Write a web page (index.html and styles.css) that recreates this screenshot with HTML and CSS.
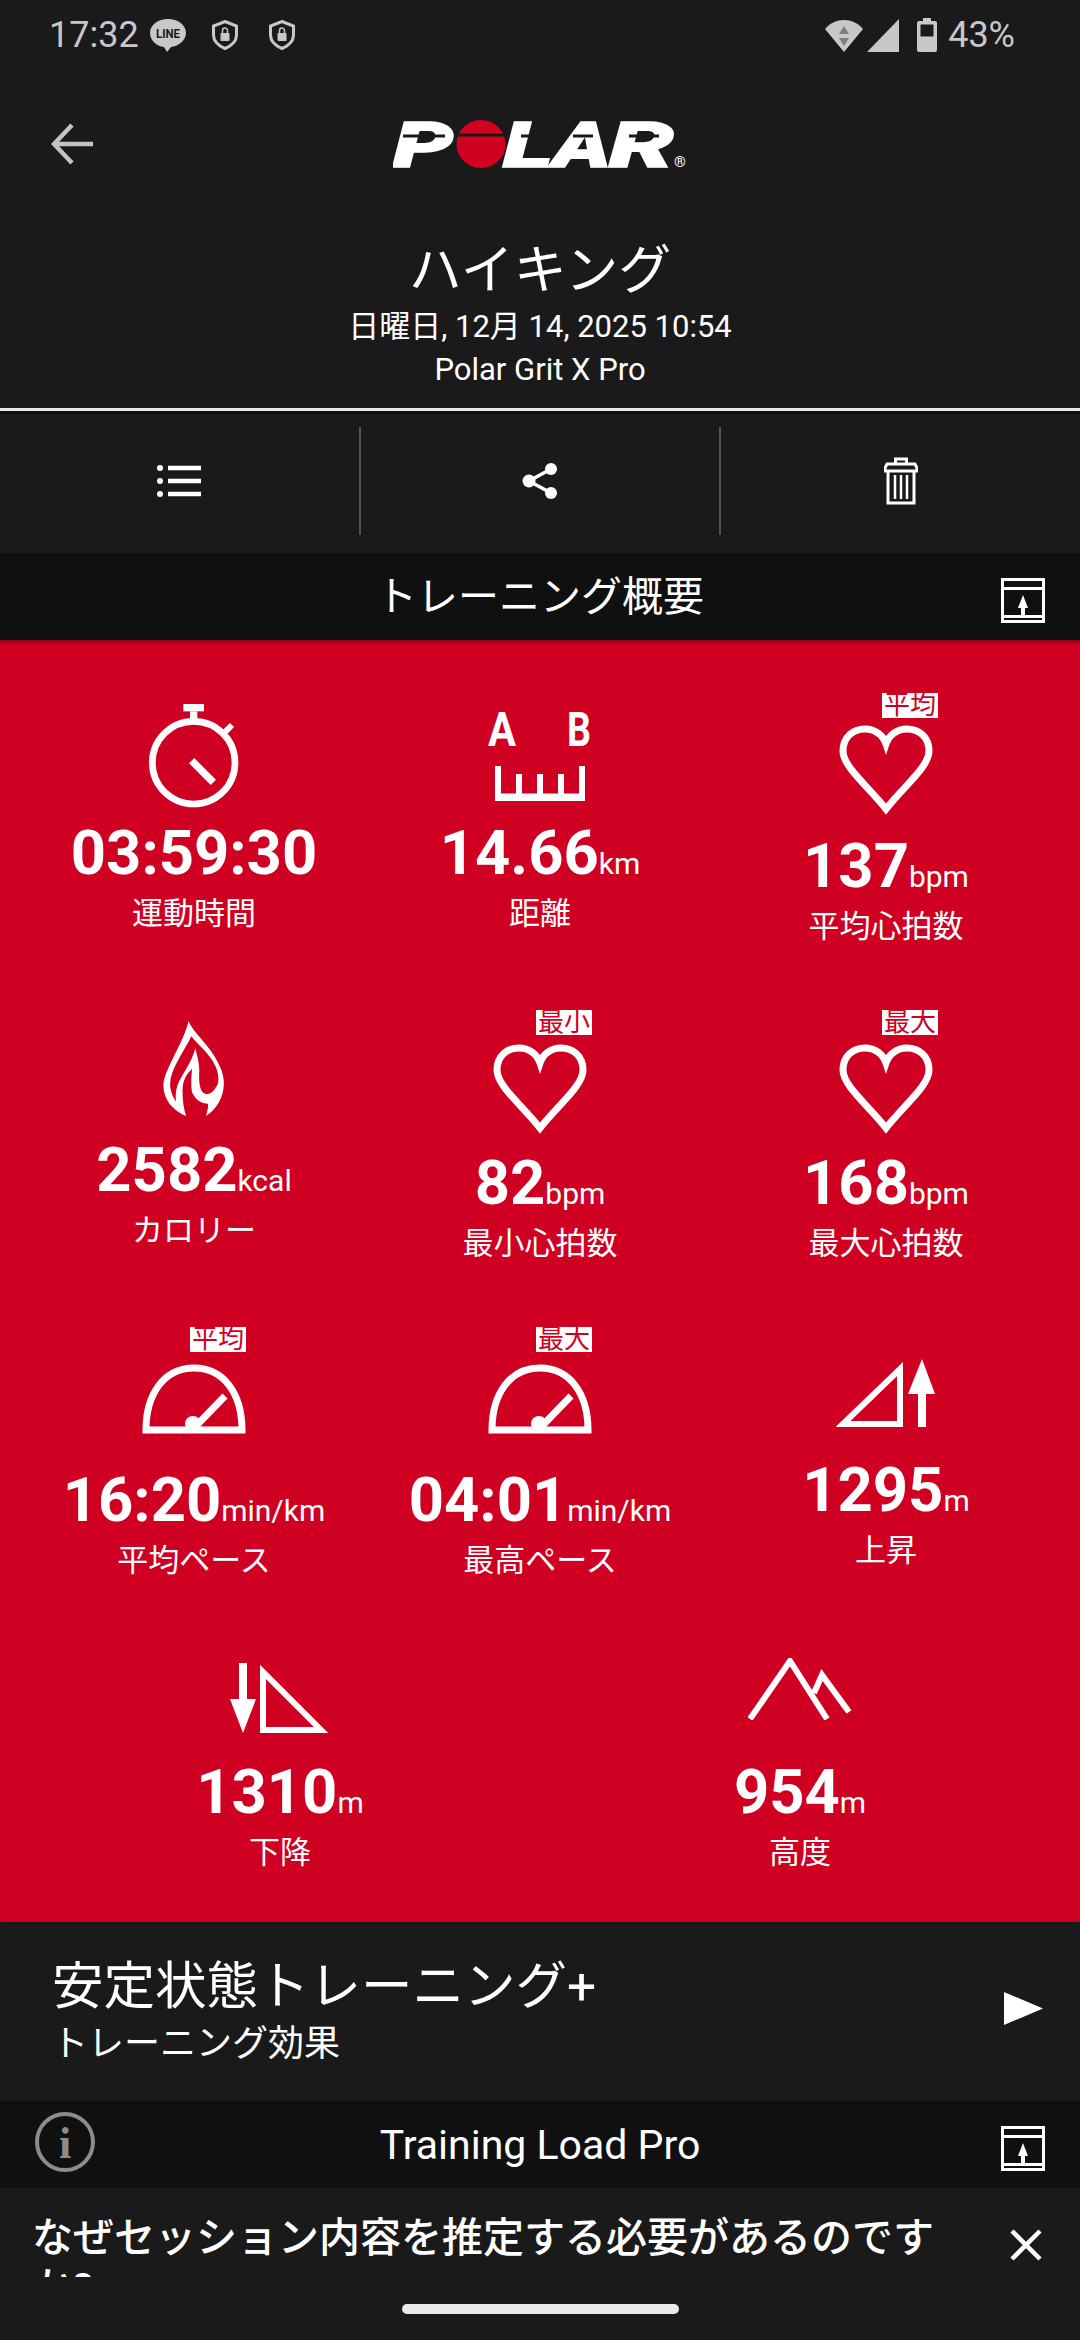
FILE: index.html
```html
<!DOCTYPE html>
<html lang="ja">

<head>
    <meta charset="UTF-8">
    <meta name="viewport" content="width=device-width, initial-scale=1.0">
    <title>Polar</title>
    <link rel="stylesheet" href="styles.css">
</head>

<body>
    <!-- status bar -->
    <div class="status">
        <div class="status-side">
            <span class="clock">17:32</span>
            <svg class="ic-line" width="36" height="35" viewBox="0 0 36 35">
                <path d="M18 1C8 1 0 7 0 15c0 7 6 13 14 14l3 5 4-5c8-1 15-7 15-14C36 7 28 1 18 1z" fill="#c8c8c8"/>
                <text x="18" y="20" text-anchor="middle" class="line-text" textLength="24" lengthAdjust="spacingAndGlyphs">LINE</text>
            </svg>
            <svg class="ic-shield" width="26" height="30" viewBox="0 0 26 30">
                <path d="M13 1.500 24.500 6v9c0 6-4.500 10.500-11.500 13.500C6 25.500 1.500 21 1.500 15V6z" fill="none" stroke="#c8c8c8" stroke-width="3"/>
                <rect x="8.500" y="13" width="9" height="8" rx="1" fill="#c8c8c8"/>
                <path d="M10.500 13v-2.500a2.500 2.500 0 0 1 5 0V13" fill="none" stroke="#c8c8c8" stroke-width="1.500"/>
            </svg>
            <svg class="ic-shield" width="26" height="30" viewBox="0 0 26 30">
                <path d="M13 1.500 24.500 6v9c0 6-4.500 10.500-11.500 13.500C6 25.500 1.500 21 1.500 15V6z" fill="none" stroke="#c8c8c8" stroke-width="3"/>
                <rect x="8.500" y="13" width="9" height="8" rx="1" fill="#c8c8c8"/>
                <path d="M10.500 13v-2.500a2.500 2.500 0 0 1 5 0V13" fill="none" stroke="#c8c8c8" stroke-width="1.500"/>
            </svg>
        </div>
        <div class="status-side">
            <svg class="ic-wifi" width="38" height="33" viewBox="0 0 38 33">
                <path d="M19 33 0 10C5 4 12 1 19 1s14 3 19 9z" fill="#c8c8c8"/>
                <path d="M19 7l5 8H14zM19 27l-5-8h10z" fill="#7d7d7d"/>
            </svg>
            <svg class="ic-signal" width="32" height="33" viewBox="0 0 32 33">
                <path d="M32 0v33H0z" fill="#c8c8c8"/>
            </svg>
            <svg class="ic-battery" width="20" height="34" viewBox="0 0 20 34">
                <path d="M6 0h8v3h4a2 2 0 0 1 2 2v27a2 2 0 0 1-2 2H2a2 2 0 0 1-2-2V5a2 2 0 0 1 2-2h4z" fill="#c8c8c8"/>
                <rect x="3.500" y="6.500" width="13" height="12" fill="#1a1a1a"/>
            </svg>
            <span class="percent">43%</span>
        </div>
    </div>

    <!-- app bar -->
    <div class="appbar">
        <svg class="back" width="42" height="42" viewBox="0 0 42 42">
            <path d="M21 2 3 21l18 19M3 21h39" fill="none" stroke="#c4c4c4" stroke-width="4.500"/>
        </svg>
        <svg class="logo" width="294" height="74" viewBox="0 -16 294 74">
            <text x="0" y="47" class="logo-text" textLength="60" lengthAdjust="spacingAndGlyphs">P</text>
            <ellipse cx="88" cy="24" rx="24.500" ry="24" fill="#d0021f"/>
            <text x="110" y="47" class="logo-text" textLength="50" lengthAdjust="spacingAndGlyphs">L</text>
            <text x="160" y="47" class="logo-text" textLength="58" lengthAdjust="spacingAndGlyphs">A</text>
            <text x="216" y="47" class="logo-text" textLength="65" lengthAdjust="spacingAndGlyphs">R</text>
            <path d="M10 16h42M63 15h50M128 16h18M180 16h20M236 16h30" stroke="#1a1a1a" stroke-width="3"/>
            <text x="281" y="47" class="logo-reg">®</text>
        </svg>
    </div>

    <!-- session title -->
    <div class="title-block">
        <div class="title">ハイキング</div>
        <div class="date">日曜日, 12月 14, 2025 10:54</div>
        <div class="device">Polar Grit X Pro</div>
    </div>

    <!-- actions -->
    <div class="actions">
        <div class="action">
            <svg width="44" height="32" viewBox="0 0 44 32">
                <path d="M11 3h33M11 16h33M11 29h33" stroke="#fff" stroke-width="4.500"/>
                <circle cx="3" cy="3" r="3" fill="#fff"/><circle cx="3" cy="16" r="3" fill="#fff"/><circle cx="3" cy="29" r="3" fill="#fff"/>
            </svg>
        </div>
        <div class="action">
            <svg width="36" height="36" viewBox="0 0 36 36">
                <path d="M29 6 7 18l22 12" fill="none" stroke="#fff" stroke-width="3.500"/>
                <circle cx="29" cy="6" r="6" fill="#fff"/><circle cx="7" cy="18" r="6.500" fill="#fff"/><circle cx="29" cy="30" r="6" fill="#fff"/>
            </svg>
        </div>
        <div class="action">
            <svg width="34" height="48" viewBox="0 0 34 48">
                <path d="M11.500 7V2h11v5M1 11l2-4h28l2 4v3H1zM4 14h26v32H4z" fill="none" stroke="#fff" stroke-width="3"/>
                <path d="M11 18v24M17 18v24M23 18v24" stroke="#fff" stroke-width="2.500"/>
            </svg>
        </div>
    </div>

    <div class="section-head">
        <span class="section-title">トレーニング概要</span>
        <svg class="section-export" width="44" height="45" viewBox="0 0 44 45">
            <path d="M1.500 1.500h41v42h-41zM1.500 10.500h41M1.500 38.500h41" fill="none" stroke="#fff" stroke-width="3"/>
            <path d="M22 17l5 13h-3v9h-4v-9h-3z" fill="#fff"/>
        </svg>
    </div>

    <!-- summary -->
    <div class="summary">
        <div class="stat">
            <div class="stat-icon">
                <svg class="gap-14" width="90" height="104" viewBox="27 30 270 312">
                    <circle cx="161" cy="206" r="124" fill="none" stroke="#fff" stroke-width="20"/>
                    <rect x="130" y="30" width="62" height="22" fill="#fff"/>
                    <rect x="150" y="52" width="22" height="24" fill="#fff"/>
                    <path d="M245 124 276 93" stroke="#fff" stroke-width="18"/>
                    <path d="M155 200 220 265" stroke="#fff" stroke-width="22"/>
                </svg>
            </div>
            <div class="value">03:59:30</div>
            <div class="label">運動時間</div>
        </div>
        <div class="stat">
            <div class="stat-icon">
                <svg class="gap-20" width="104" height="102" viewBox="0 -12 104 102">
                    <text x="0" y="34" class="ab-text" textLength="28" lengthAdjust="spacingAndGlyphs">A</text>
                    <text x="79" y="34" class="ab-text" textLength="24" lengthAdjust="spacingAndGlyphs">B</text>
                    <path d="M10 54v32h84V54M31 62v24M52 62v24M73 62v24" fill="none" stroke="#fff" stroke-width="6"/>
                    <path d="M7 85h90" stroke="#fff" stroke-width="7"/>
                </svg>
            </div>
            <div class="value">14.66<span class="unit">km</span></div>
            <div class="label">距離</div>
        </div>
        <div class="stat stat-tagged">
            <div class="stat-icon">
                <span class="tag">平均</span>
                <svg class="gap-20" width="94" height="90" viewBox="0 0 94 90">
                    <path class="heart" d="M47 84C30 62 4 42 4 26 4 12 14 4 26 4c10 0 18 6 21 15C50 10 58 4 68 4c12 0 22 8 22 22 0 16-26 36-43 58z"/>
                </svg>
            </div>
            <div class="value">137<span class="unit">bpm</span></div>
            <div class="label">平均心拍数</div>
        </div>

        <div class="stat">
            <div class="stat-icon">
                <svg class="gap-22" width="65" height="98" viewBox="60 20 195 295">
                    <path fill="#fff" fill-rule="evenodd" d="M140 25C150 60 205 95 235 165C262 225 235 285 192 312C195 300 200 285 198 275C180 275 160 265 150 240C146 220 148 195 150 170C135 185 125 200 122 225C120 260 125 290 132 312C90 295 62 260 64 215C68 170 125 90 140 25ZM148 72C125 120 85 170 84 215C84 235 92 255 102 268C98 240 105 215 118 195C135 165 152 140 160 108C165 130 172 150 172 175C170 205 172 240 190 245C203 248 215 240 222 225C232 215 232 190 222 165C205 125 165 95 148 72Z"/>
                </svg>
            </div>
            <div class="value">2582<span class="unit">kcal</span></div>
            <div class="label">カロリー</div>
        </div>
        <div class="stat stat-tagged">
            <div class="stat-icon">
                <span class="tag">最小</span>
                <svg class="gap-18" width="94" height="90" viewBox="0 0 94 90">
                    <path class="heart" d="M47 84C30 62 4 42 4 26 4 12 14 4 26 4c10 0 18 6 21 15C50 10 58 4 68 4c12 0 22 8 22 22 0 16-26 36-43 58z"/>
                </svg>
            </div>
            <div class="value">82<span class="unit">bpm</span></div>
            <div class="label">最小心拍数</div>
        </div>
        <div class="stat stat-tagged">
            <div class="stat-icon">
                <span class="tag">最大</span>
                <svg class="gap-18" width="94" height="90" viewBox="0 0 94 90">
                    <path class="heart" d="M47 84C30 62 4 42 4 26 4 12 14 4 26 4c10 0 18 6 21 15C50 10 58 4 68 4c12 0 22 8 22 22 0 16-26 36-43 58z"/>
                </svg>
            </div>
            <div class="value">168<span class="unit">bpm</span></div>
            <div class="label">最大心拍数</div>
        </div>

        <div class="stat stat-tagged">
            <div class="stat-icon">
                <span class="tag">平均</span>
                <svg class="gap-35" width="104" height="70" viewBox="0 0 104 70">
                    <path d="M4 66C4 30 22 4 52 4s48 26 48 62z" fill="none" stroke="#fff" stroke-width="7"/>
                    <path d="M54 62 83 32" stroke="#fff" stroke-width="7"/>
                    <circle cx="51" cy="60" r="8" fill="#fff"/>
                </svg>
            </div>
            <div class="value">16:20<span class="unit">min/km</span></div>
            <div class="label">平均ペース</div>
        </div>
        <div class="stat stat-tagged">
            <div class="stat-icon">
                <span class="tag">最大</span>
                <svg class="gap-35" width="104" height="70" viewBox="0 0 104 70">
                    <path d="M4 66C4 30 22 4 52 4s48 26 48 62z" fill="none" stroke="#fff" stroke-width="7"/>
                    <path d="M54 62 83 32" stroke="#fff" stroke-width="7"/>
                    <circle cx="51" cy="60" r="8" fill="#fff"/>
                </svg>
            </div>
            <div class="value">04:01<span class="unit">min/km</span></div>
            <div class="label">最高ペース</div>
        </div>
        <div class="stat">
            <div class="stat-icon stat-icon-rise">
                <svg class="gap-30" width="100" height="70" viewBox="0 0 100 70">
                    <path d="M64 10V65H7Z" fill="none" stroke="#fff" stroke-width="6"/>
                    <path d="M86 0 99 35H90V68H82V35H72Z" fill="#fff"/>
                </svg>
            </div>
            <div class="value">1295<span class="unit">m</span></div>
            <div class="label">上昇</div>
        </div>

        <div class="stat-row">
            <div class="stat">
                <div class="stat-icon stat-icon-low">
                    <svg class="gap-28" width="100" height="70" viewBox="0 0 100 70">
                        <path d="M9 0H17V36H26L13 70 0 36H9Z" fill="#fff"/>
                        <path d="M33 9V67H91Z" fill="none" stroke="#fff" stroke-width="6"/>
                    </svg>
                </div>
                <div class="value">1310<span class="unit">m</span></div>
                <div class="label">下降</div>
            </div>
            <div class="stat">
                <div class="stat-icon stat-icon-low">
                    <svg class="gap-41" width="104" height="62" viewBox="0 0 104 62">
                        <path d="M2 61 42 3l37 58M66 35l8-18 27 37" fill="none" stroke="#fff" stroke-width="6"/>
                    </svg>
                </div>
                <div class="value">954<span class="unit">m</span></div>
                <div class="label">高度</div>
            </div>
        </div>
    </div>

    <!-- training benefit -->
    <div class="benefit">
        <div class="benefit-text">
            <div class="benefit-title">安定状態トレーニング+</div>
            <div class="benefit-sub">トレーニング効果</div>
        </div>
        <svg class="play" width="39" height="33" viewBox="0 0 39 33">
            <path d="M0 0l39 16.500L0 33z" fill="#fff"/>
        </svg>
    </div>

    <div class="section-head section-head-load">
        <svg class="section-info" width="60" height="60" viewBox="0 0 60 60">
            <circle cx="30" cy="30" r="28" fill="none" stroke="#8c8c8c" stroke-width="4"/>
            <text x="30" y="46" class="info-text">i</text>
        </svg>
        <span class="section-title">Training Load Pro</span>
        <svg class="section-export" width="44" height="45" viewBox="0 0 44 45">
            <path d="M1.500 1.500h41v42h-41zM1.500 10.500h41M1.500 38.500h41" fill="none" stroke="#fff" stroke-width="3"/>
            <path d="M22 17l5 13h-3v9h-4v-9h-3z" fill="#fff"/>
        </svg>
    </div>

    <!-- question, cut off by the home bar area -->
    <div class="question">
        <div class="question-text">なぜセッション内容を推定する必要があるのですか?</div>
        <svg class="close" width="32" height="32" viewBox="0 0 32 32">
            <path d="M2 2l28 28M30 2 2 30" stroke="#fff" stroke-width="4.500"/>
        </svg>
    </div>

    <div class="home-wrap">
        <div class="home-bar"></div>
    </div>
</body>

</html>
```

FILE: styles.css
```css
* {
    margin: 0;
    padding: 0;
    box-sizing: border-box;
}

html,
body {
    width: 1080px;
    height: 2340px;
    overflow: hidden;
}

body {
    background-color: #1a1a1a;
    color: #fff;
    font-family: Roboto, "Noto Sans CJK JP", sans-serif;
}

svg {
    display: block;
    flex: none;
}

/* status bar */
.status {
    height: 70px;
    padding: 0 65px 0 49px;
    display: flex;
    justify-content: space-between;
    align-items: center;
    color: #c8c8c8;
    font-size: 36px;
}

.status-side {
    display: flex;
    align-items: center;
}

.clock {
    width: 101px;
}

.ic-line {
    margin-right: 26px;
}

.ic-shield {
    margin-right: 31px;
}

.ic-shield:last-child {
    margin-right: 0;
}

.line-text {
    font: 700 12px Roboto, sans-serif;
    fill: #1a1a1a;
}

.ic-wifi {
    margin-right: 4px;
}

.ic-signal {
    margin-right: 18px;
}

.ic-battery {
    margin-right: 11px;
}

/* app bar */
.appbar {
    height: 146px;
    padding-bottom: 4px;
    position: relative;
    display: flex;
    justify-content: center;
    align-items: center;
}

.back {
    position: absolute;
    left: 51px;
    top: 53px;
}

.logo-text {
    font: italic 900 63px Roboto, sans-serif;
    fill: #fff;
    stroke: #fff;
    stroke-width: 1.5px;
}

.logo-reg {
    font: 400 15px Roboto, sans-serif;
    fill: #fff;
}

/* session title */
.title-block {
    height: 195px;
    padding-top: 21px;
    border-bottom: 3px solid #e8e8e8;
    text-align: center;
}

.title {
    font-size: 53px;
    line-height: 68px;
}

.date {
    font-size: 31px;
    line-height: 42px;
    margin-top: 1px;
}

.device {
    font-size: 31px;
    line-height: 42px;
    margin-top: 1px;
}

/* actions */
.actions {
    height: 142px;
    padding: 13px 0 18px;
    display: flex;
    border-top: 3px solid #0e0e0e;
}

.action {
    flex: 1;
    display: flex;
    justify-content: center;
    align-items: center;
    border-left: 2px solid #555;
}

.action:first-child {
    border-left: 0;
}

/* section headers */
.section-head {
    height: 87px;
    background-color: #101010;
    position: relative;
    display: flex;
    justify-content: center;
    align-items: center;
}

.section-title {
    font-size: 41px;
    line-height: 50px;
}

.section-export {
    position: absolute;
    right: 35px;
    top: 25px;
}

.section-info {
    position: absolute;
    left: 35px;
    top: 11px;
}

.info-text {
    font: 700 44px "Liberation Serif", serif;
    fill: #8c8c8c;
    text-anchor: middle;
}

.section-head-load {
    margin-top: 4px;
}

/* summary grid */
.summary {
    height: 1282px;
    padding: 50px 21px 0;
    background-color: #cf0022;
    display: grid;
    grid-template-columns: repeat(3, 346px);
    row-gap: 60px;
    align-content: start;
    box-shadow: inset 0 5px 4px -3px rgba(0, 0, 0, 0.35);
}

.stat {
    width: 346px;
    display: flex;
    flex-direction: column;
    align-items: center;
}

.stat-icon {
    height: 132px;
    position: relative;
    display: flex;
    align-items: flex-end;
    justify-content: center;
    align-self: stretch;
}

.stat-tagged .stat-icon {
    height: 145px;
}

.stat-icon-rise {
    height: 135px;
}

.stat-icon-low {
    height: 120px;
}

.gap-14 { margin-bottom: 14px; }
.gap-18 { margin-bottom: 18px; }
.gap-20 { margin-bottom: 20px; }
.gap-22 { margin-bottom: 22px; }
.gap-28 { margin-bottom: 28px; }
.gap-30 { margin-bottom: 30px; }
.gap-35 { margin-bottom: 35px; }
.gap-41 { margin-bottom: 41px; }

.tag {
    position: absolute;
    top: 3px;
    left: 169px;
    width: 56px;
    height: 25px;
    background-color: #fff;
    color: #cf0022;
    font-size: 26px;
    line-height: 25px;
    text-align: center;
    white-space: nowrap;
}

.value {
    font-family: Roboto, sans-serif;
    font-size: 61.5px;
    font-weight: 700;
    line-height: 62px;
    white-space: nowrap;
}

.unit {
    font-size: 30px;
    font-weight: 400;
    line-height: 1;
}

.label {
    font-size: 31px;
    line-height: 40px;
    margin-top: 10px;
}

.stat-row {
    grid-column: 1 / -1;
    display: flex;
    gap: 174px;
    padding-left: 86px;
}

.heart {
    fill: none;
    stroke: #fff;
    stroke-width: 7;
    stroke-linejoin: miter;
}

.ab-text {
    font: 700 48px Roboto, sans-serif;
    fill: #fff;
}

/* training benefit */
.benefit {
    height: 175px;
    padding: 33px 37px 0 52px;
    display: flex;
    justify-content: space-between;
}

.benefit-title {
    font-size: 51.5px;
    line-height: 64px;
}

.benefit-sub {
    font-size: 36px;
    line-height: 50px;
}

.play {
    margin-top: 37px;
}

/* question */
.question {
    padding: 25px 38px 0 32px;
    display: flex;
    justify-content: space-between;
}

.question-text {
    width: 930px;
    height: 64px;
    font-size: 41px;
    font-weight: 500;
    line-height: 50px;
    overflow: hidden;
}

.close {
    margin-top: 16px;
}

/* home indicator */
.home-wrap {
    padding-top: 27px;
    display: flex;
    justify-content: center;
}

.home-bar {
    width: 277px;
    height: 10px;
    border-radius: 5px;
    background-color: #ebebeb;
}
```
